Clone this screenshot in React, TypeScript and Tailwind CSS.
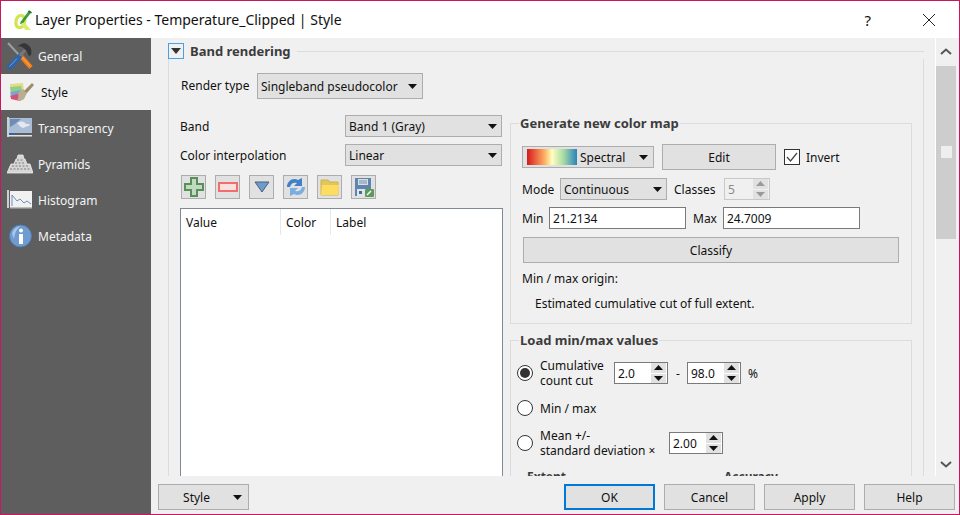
import type { ReactNode } from "react";

const btn = "flex items-center justify-center border border-[#adadad] bg-[#e1e1e1]";
const textBtn = `${btn} pt-[2px]`;

function Arrow({ className = "" }: { className?: string }) {
  return (
    <svg width="9" height="5" viewBox="0 0 9 5" className={className}>
      <path d="M0 0h9L4.500 5z" fill="#111" />
    </svg>
  );
}

function Combo({ label, className }: { label: string; className: string }) {
  return (
    <div className={`flex h-[22px] items-center justify-between border border-[#adadad] bg-[#e1e1e1] pl-[3px] pr-[4px] ${className}`}>
      <span>{label}</span>
      <Arrow />
    </div>
  );
}

function Spin({ value, className, disabled = false }: { value: string; className: string; disabled?: boolean }) {
  const fill = disabled ? "#9a9a9a" : "#111";
  return (
    <div className={`flex h-[22px] items-center justify-between border ${disabled ? "border-[#c8c8c8] text-[#8a8a8a]" : "border-[#7a7a7a] bg-white"} pl-[3px] pr-px ${className}`}>
      <span>{value}</span>
      <div className="flex h-[20px] w-[15px] flex-col gap-px">
        <div className="flex flex-1 items-center justify-center bg-[#e1e1e1]">
          <svg width="9" height="5" viewBox="0 0 9 5"><path d="M0 5h9L4.500 0z" fill={fill} /></svg>
        </div>
        <div className="flex flex-1 items-center justify-center bg-[#e1e1e1]">
          <svg width="9" height="5" viewBox="0 0 9 5"><path d="M0 0h9L4.500 5z" fill={fill} /></svg>
        </div>
      </div>
    </div>
  );
}

function Radio({ checked = false }: { checked?: boolean }) {
  return (
    <div className="flex h-4 w-4 shrink-0 items-center justify-center rounded-full border border-[#333] bg-white">
      {checked && <div className="h-[10px] w-[10px] rounded-full bg-[#333]" />}
    </div>
  );
}

function Group({ title, className, legend, children }: { title: string; className: string; legend: string; children: ReactNode }) {
  return (
    <fieldset className={`w-[402px] border border-[#dcdcdc] ${className}`}>
      <legend className={`px-px text-[13px] leading-4 font-bold text-[#3c3c3c] ${legend}`}>{title}</legend>
      {children}
    </fieldset>
  );
}

function QgisLogo() {
  return (
    <svg width="18" height="22" viewBox="0 0 18 22">
      <path d="M7 6.500C3.500 6.500 1.500 10.500 2 15c.5 4 5 4.500 7 2 3-3.500 2.200-10.500-2-10.500z" fill="none" stroke="#cfe64f" strokeWidth="3.200" />
      <path d="M7 15.500l4.500 5.500H17l-6-7z" fill="#dcec6a" />
      <path d="M6.500 13L15 1.500l2.500 1.500L9.500 13.500 6 15.500z" fill="#3f9b3a" />
      <path d="M14.500 2l3 1.800" stroke="#1f6f2a" strokeWidth="1.500" />
    </svg>
  );
}

function ToolsIcon() {
  return (
    <svg width="26" height="28" viewBox="0 0 26 28">
      <path d="M1 1l12 13" stroke="#9a9fa4" strokeWidth="2" />
      <path d="M12 12l12 13.500" stroke="#ef7d1a" strokeWidth="4.500" />
      <path d="M14.500 14.500l9 10" stroke="#f7b066" strokeWidth="1" />
      <path d="M3 25L13 14" stroke="#2a65ad" strokeWidth="5" strokeLinecap="round" />
      <path d="M2.500 24.500L10 16.500" stroke="#6fa0d8" strokeWidth="1" />
      <path d="M13 14l5-6" stroke="#777" strokeWidth="3" />
      <path d="M10 5c4-4 8-5 11-2 3 2 4 5 3 10l-2 1-3-6-4-3c-2-1-3-1-5 0z" fill="#34363a" />
    </svg>
  );
}

function BrushIcon() {
  return (
    <svg width="26" height="22" viewBox="0 0 26 22">
      <path d="M1 3l13-1 1 8-5 10-8-2z" fill="#e2dc84" />
      <path d="M1 6l11-1 1 4-11 3z" fill="#8fcf8a" />
      <path d="M1.500 11l11-2-1 4-10 3z" fill="#7fa2cf" />
      <path d="M1.500 15l10-3 0 8-9.500-2z" fill="#d2527b" />
      <path d="M9 12l5-4 4 4-3 6c-2 2-7 2-7 1 1-1 2-3 1-7z" fill="#b8ae90" />
      <path d="M15 10l8-8 2 2-7 8z" fill="#9b8d66" />
    </svg>
  );
}

function MapIcon() {
  return (
    <svg width="26" height="22" viewBox="0 0 26 22">
      <rect x="0" y="0" width="2" height="20" fill="#d0d0d0" />
      <rect x="2" y="1" width="23" height="15" fill="#a9bed6" />
      <path d="M3 2h11L8 7l-5 3z" fill="#6f8db3" />
      <path d="M10 6c3-2 6-2 8 0s4 0 5 2c-2 2-5 1-6 3-3 0-5-3-7-5z" fill="#e4e9f0" />
      <rect x="1" y="18" width="24" height="1.500" fill="#e4e4e4" />
      <rect x="2" y="16" width="5" height="2" fill="#2b62b3" />
    </svg>
  );
}

function PyramidIcon() {
  return (
    <svg width="26" height="20" viewBox="0 0 26 20">
      <path d="M0 19l4-9h3l2-5h1l1-4h5l1 4h1l2 5h3l3 9z" fill="#d6d6d6" stroke="#ececec" strokeWidth=".8" />
      <path d="M5 12h16M3 15h20M10 6h6M8 9h10" stroke="#7d7d7d" strokeWidth="1" strokeDasharray="2 1.500" />
    </svg>
  );
}

function ChartIcon() {
  return (
    <svg width="26" height="20" viewBox="0 0 26 20">
      <rect x="0" y="0" width="2" height="18" fill="#cfcfcf" />
      <rect x="3" y="1" width="22" height="16" fill="#f1f1f1" />
      <rect x="3" y="17" width="22" height="1.500" fill="#bbb" />
      <path d="M5 16V5l5 6 3-2 4 4 3-2 4 3" fill="none" stroke="#6d8fb8" strokeWidth="1" />
    </svg>
  );
}

function InfoIcon() {
  return (
    <svg width="23" height="24" viewBox="0 0 23 24">
      <circle cx="11.500" cy="12" r="11" fill="#6f9bd1" stroke="#4b78b3" strokeWidth=".8" />
      <path d="M3 10c1-5 5-8 9-8-4 2-6 6-7 13z" fill="#a9c6e8" />
      <rect x="10" y="10" width="4" height="10" fill="#fff" />
      <circle cx="12" cy="6.500" r="2" fill="#fff" />
    </svg>
  );
}

const toolIcons = [
  <svg key="add" width="20" height="20" viewBox="0 0 20 20"><path d="M7 1h6v6h6v6h-6v6H7v-6H1V7h6z" fill="#bfdcbf" stroke="#5a8f5c" strokeWidth="2" /></svg>,
  <svg key="del" width="20" height="10" viewBox="0 0 20 10"><rect x="1" y="1" width="18" height="8" fill="#fbe0e0" stroke="#f26d6d" strokeWidth="2" /></svg>,
  <svg key="down" width="16" height="12" viewBox="0 0 16 12"><path d="M1 1h14L8 11z" fill="#6f9bcc" stroke="#47617c" /></svg>,
  <svg key="refresh" width="20" height="20" viewBox="0 0 20 20">
    <path d="M1 10c0-6 6-10 11-7l4-2v8h-8l3-3c-3-1-6 0-7 4z" fill="#3f82c8" />
    <path d="M19 10c0 6-6 10-11 7l-4 2v-8h8l-3 3c3 1 6 0 7-4z" fill="#79aede" />
  </svg>,
  <svg key="open" width="20" height="17" viewBox="0 0 20 17"><path d="M1 1h7l2 2h8v13H1z" fill="#e3c65a" stroke="#c9b24e" /><path d="M2 6h17l-1 10H1z" fill="#fddc60" /></svg>,
  <svg key="save" width="20" height="20" viewBox="0 0 20 20">
    <path d="M1 1h16v18H1z" fill="#5f84ae" />
    <rect x="4" y="2" width="10" height="6" fill="#d8dee6" />
    <path d="M5 4h8M5 6h8" stroke="#7b8ea5" />
    <rect x="3" y="12" width="11" height="7" fill="#dfe5ec" />
    <rect x="5" y="14" width="3" height="3" fill="#4a6a90" />
    <rect x="11" y="12" width="9" height="8" rx="1" fill="#5d9a58" />
    <path d="M13 18l4-4" stroke="#fff" strokeWidth="1.500" />
  </svg>,
];

const navItems = [
  { label: "General", icon: <ToolsIcon /> },
  { label: "Style", icon: <BrushIcon />, active: true },
  { label: "Transparency", icon: <MapIcon /> },
  { label: "Pyramids", icon: <PyramidIcon /> },
  { label: "Histogram", icon: <ChartIcon /> },
  { label: "Metadata", icon: <InfoIcon /> },
];

function ColorMapGroup() {
  return (
    <Group title="Generate new color map" legend="-ml-[3px]" className="pb-[11px] pl-[11px] pt-[13px]">
      <div className="flex h-[26px] items-center">
        <div className="flex h-[22px] w-[132px] items-center border border-[#adadad] bg-[#e1e1e1] pl-1 pr-[5px]">
          <div className="h-4 w-[50px] bg-[linear-gradient(to_right,#d7191c,#fdae61_35%,#ffffbf_50%,#abdda4_72%,#2b83ba)]" />
          <span className="ml-[3px] flex-1">Spectral</span>
          <Arrow />
        </div>
        <div className={`${textBtn} ml-2 h-[26px] w-[114px]`}>Edit</div>
        <div className="ml-2 flex h-4 w-4 items-center justify-center border border-[#333] bg-white">
          <svg width="12" height="10" viewBox="0 0 12 10"><path d="M1 5l3.500 4L11 1" fill="none" stroke="#444" strokeWidth="1.200" /></svg>
        </div>
        <span className="ml-[6px]">Invert</span>
      </div>
      <div className="mt-2 flex items-center">
        <span className="w-[38px]">Mode</span>
        <Combo label="Continuous" className="w-[107px]" />
        <span className="ml-[7px] w-[50px]">Classes</span>
        <Spin value="5" disabled className="w-[46px]" />
      </div>
      <div className="mt-[7px] flex items-center">
        <span className="w-[27px]">Min</span>
        <div className="flex h-[22px] w-[137px] items-center border border-[#7a7a7a] bg-white pl-[3px]"><span>21.2134</span></div>
        <span className="ml-[7px] w-[30px]">Max</span>
        <div className="flex h-[22px] w-[137px] items-center border border-[#7a7a7a] bg-white pl-[3px]"><span>24.7009</span></div>
      </div>
      <div className={`${textBtn} ml-px mt-2 h-[26px] w-[376px]`}>Classify</div>
      <div className="mt-2">Min / max origin:</div>
      <div className="ml-[13px] mt-[9px]">Estimated cumulative cut of full extent.</div>
    </Group>
  );
}

function MinMaxGroup() {
  return (
    <Group title="Load min/max values" legend="ml-[2px]" className="mt-2 pb-5 pl-[6px] pt-[10px]">
      <div className="flex h-[30px] items-center">
        <Radio checked />
        <div className="ml-[7px] w-[74px] leading-[15px]">Cumulative<br />count cut</div>
        <Spin value="2.0" className="w-[54px]" />
        <span className="ml-2 w-[11px]">-</span>
        <Spin value="98.0" className="w-[54px]" />
        <span className="ml-[7px]">%</span>
      </div>
      <div className="mt-3 flex h-4 items-center">
        <Radio />
        <span className="ml-[7px]">Min / max</span>
      </div>
      <div className="mt-3 flex h-[30px] items-center">
        <Radio />
        <div className="ml-[7px] w-[129px] leading-[15px]">Mean +/-<br />standard deviation ×</div>
        <Spin value="2.00" className="w-[54px]" />
      </div>
      <div className="ml-[10px] mt-[9px] flex font-bold text-[#3c3c3c]">
        <span className="w-[197px]">Extent</span>
        <span>Accuracy</span>
      </div>
    </Group>
  );
}

export default function App() {
  return (
    <div className="flex h-[515px] w-[960px] flex-col overflow-hidden border border-[#c8175f] bg-[#f0f0f0] text-[12px] leading-4 text-[#111] [font-family:'Noto_Sans',sans-serif]">
      <div className="flex h-[37px] shrink-0 items-center bg-white">
        <div className="ml-[10px] flex w-6 justify-center"><QgisLogo /></div>
        <div className="text-[14px]">Layer Properties - Temperature_Clipped | Style</div>
        <div className="ml-auto text-[15px]">?</div>
        <svg width="12" height="12" viewBox="0 0 12 12" className="ml-[52px] mr-[24px]">
          <path d="M0 0l12 12M12 0L0 12" stroke="#222" strokeWidth="1" />
        </svg>
      </div>

      <div className="flex min-h-0 flex-1 [&_span]:pt-[2px]">
        <nav className="w-[150px] shrink-0 bg-[#5e5e5e] text-[#f4f4f4]">
          {navItems.map((item) => (
            <div key={item.label} className={`flex h-9 items-center ${item.active ? "bg-[#f0f0f0] text-[#111]" : ""}`}>
              <div className={`flex shrink-0 justify-center pl-px ${item.active ? "w-[40px]" : "w-[37px]"}`}>{item.icon}</div>
              <span>{item.label}</span>
            </div>
          ))}
        </nav>

        <div className="flex min-w-0 flex-1 flex-col">
          <div className="flex h-[438px] shrink-0">
            <div className="w-[784px] shrink-0 overflow-hidden pl-[17px] pt-[5px]">
              <div className="flex h-4 w-[756px] items-center">
                <div className="flex h-4 w-4 items-center justify-center border border-[#4aa0e6]">
                  <svg width="10" height="6" viewBox="0 0 10 6"><path d="M0 0h10L5 6z" fill="#333" /></svg>
                </div>
                <div className="ml-[6px] text-[13px] font-bold text-[#3c3c3c]">Band rendering</div>
                <div className="ml-[6px] h-px flex-1 bg-[#dcdcdc]" />
              </div>
              <div className="w-[756px] border-x border-[#dcdcdc] pt-[14px]">
                <div className="flex h-[26px] items-center pl-3">
                  <div className="w-[76px]">Render type</div>
                  <div className="flex h-[26px] w-[166px] items-center justify-between border border-[#adadad] bg-[#e1e1e1] pl-[3px] pr-[5px]">
                    <span>Singleband pseudocolor</span>
                    <Arrow />
                  </div>
                </div>
                <div className="mt-4 flex items-start pl-[11px]">
                  <div className="w-[323px] shrink-0">
                    <div className="flex items-center">
                      <span className="w-[165px]">Band</span>
                      <Combo label="Band 1 (Gray)" className="w-[157px]" />
                    </div>
                    <div className="mt-[7px] flex items-center">
                      <span className="w-[165px]">Color interpolation</span>
                      <Combo label="Linear" className="w-[157px]" />
                    </div>
                    <div className="ml-px mt-[9px] flex gap-[9px]">
                      {toolIcons.map((icon, i) => (
                        <div key={i} className={`${btn} h-6 w-[25px]`}>{icon}</div>
                      ))}
                    </div>
                    <div className="mt-[9px] h-[290px] border border-[#7f8a96] bg-white">
                      <div className="flex h-[26px] items-center">
                        <div className="flex h-full w-[100px] items-center border-r border-[#e8e8e8] pl-[5px]"><span>Value</span></div>
                        <div className="flex h-full w-[50px] items-center border-r border-[#e8e8e8] pl-[5px]"><span>Color</span></div>
                        <div className="flex h-full items-center pl-[5px]"><span>Label</span></div>
                      </div>
                    </div>
                  </div>
                  <div className="ml-[7px]">
                    <ColorMapGroup />
                    <MinMaxGroup />
                  </div>
                </div>
              </div>
            </div>

            <div className="flex w-[21px] shrink-0 flex-col items-center border-l border-white">
              <svg width="12" height="7" viewBox="0 0 12 7" className="mt-[10px]">
                <path d="M1 6l5-4.500L11 6" fill="none" stroke="#555" strokeWidth="2" />
              </svg>
              <div className="mt-[11px] flex h-[173px] w-full flex-col items-center bg-[#cdcdcd] pt-20">
                <div className="h-3 w-[11px] bg-[#eeeeee]" />
              </div>
              <svg width="12" height="7" viewBox="0 0 12 7" className="mt-auto mb-[8px]">
                <path d="M1 1l5 4.500L11 1" fill="none" stroke="#555" strokeWidth="2" />
              </svg>
            </div>
          </div>

          <div className="flex flex-1 items-start pr-[4px] pt-2">
            <div className={`${btn} relative ml-[7px] h-[26px] w-[91px]`}>
              <span className="mr-[14px]">Style</span>
              <Arrow className="absolute right-[6px] top-[10px]" />
            </div>
            <div className="ml-auto flex gap-[9px]">
              <div className="flex h-[26px] w-[91px] items-center justify-center border-2 border-[#0078d7] bg-[#e1e1e1] pt-[2px]">OK</div>
              <div className={`${textBtn} h-[26px] w-[91px]`}>Cancel</div>
              <div className={`${textBtn} h-[26px] w-[91px]`}>Apply</div>
              <div className={`${textBtn} h-[26px] w-[91px]`}>Help</div>
            </div>
          </div>
        </div>
      </div>
    </div>
  );
}
